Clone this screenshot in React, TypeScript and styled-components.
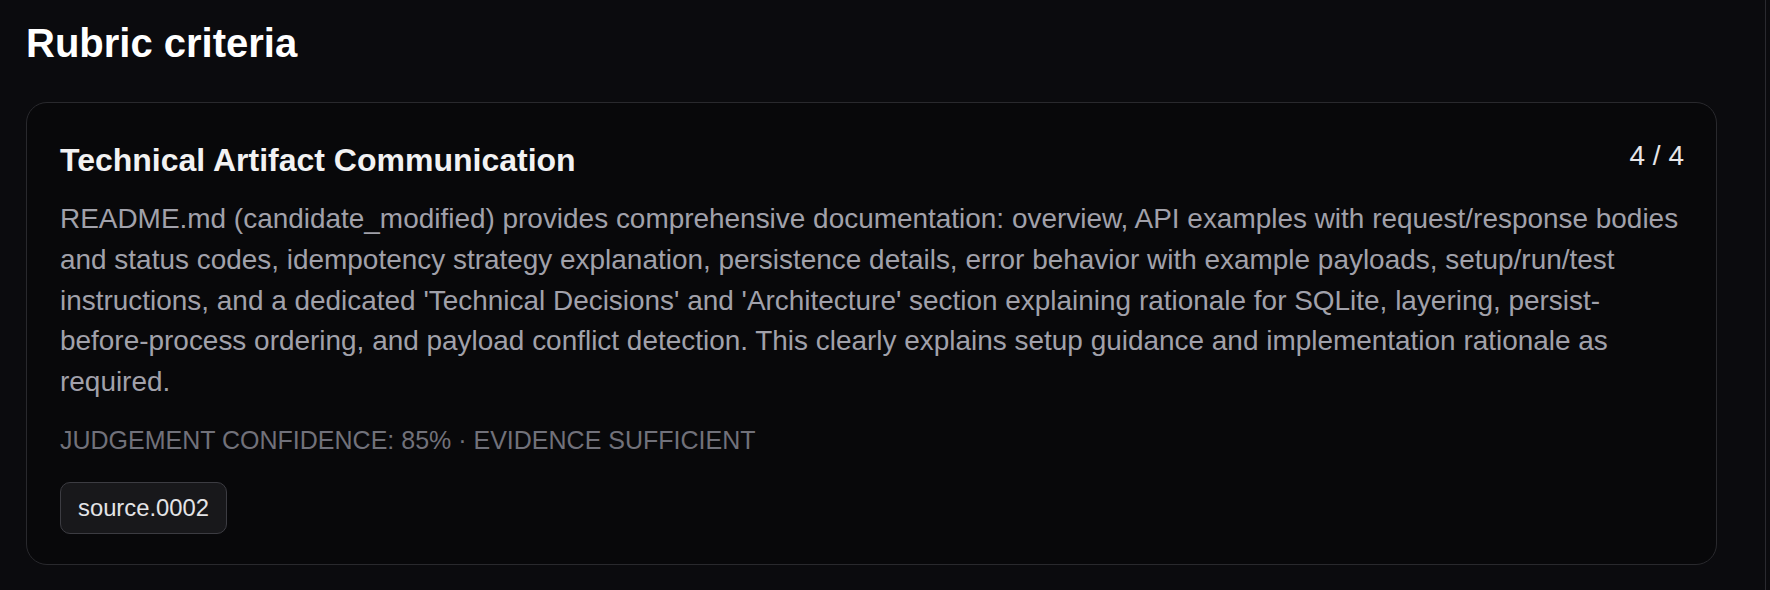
import React from "react";
import styled, { createGlobalStyle } from "styled-components";

const GlobalStyle = createGlobalStyle`
  html, body {
    margin: 0;
    padding: 0;
    background: #0b0b0e;
  }
  body {
    font-family: "Liberation Sans", Arial, Helvetica, sans-serif;
    -webkit-font-smoothing: antialiased;
  }
  * { box-sizing: border-box; }
`;

const Page = styled.main`
  width: 1766px;
  min-height: 590px;
  padding: 20px 48px 0 26px;
  border-right: 1px solid #2a2a2f;
  background: #0b0b0e;
`;

const Heading = styled.h2`
  margin: 0 0 36px;
  font-size: 40px;
  line-height: 46px;
  font-weight: 700;
  color: #ffffff;
`;

const Card = styled.section`
  border: 1px solid #29292d;
  border-radius: 21px;
  background: #08080a;
  padding: 33px 32px 30px 33px;
  display: flex;
  flex-direction: column;
`;

const CardHeader = styled.div`
  display: flex;
  align-items: flex-start;
  justify-content: space-between;
  gap: 24px;
`;

const CardTitle = styled.h3`
  margin: 0;
  padding-top: 5px;
  font-size: 32px;
  line-height: 39.4px;
  font-weight: 700;
  color: #f2f2f3;
`;

const Score = styled.span`
  font-size: 28px;
  line-height: 39.2px;
  color: #e6e6e8;
  white-space: nowrap;
`;

const Body = styled.p`
  margin: 19px 0 0;
  font-size: 27.95px;
  line-height: 40.6px;
  color: #a1a1aa;
`;

const Meta = styled.div`
  margin-top: 21px;
  font-size: 25px;
  line-height: 35.9px;
  color: #71717a;
  text-transform: uppercase;
`;

const Sources = styled.div`
  display: flex;
  flex-wrap: wrap;
  gap: 12px;
  margin-top: 23px;
`;

const Chip = styled.span`
  display: inline-block;
  padding: 8px 17px;
  font-size: 23.8px;
  line-height: 34px;
  color: #e4e4e7;
  background: #18181b;
  border: 1px solid #3c3c42;
  border-radius: 10px;
`;

const criterion = {
  title: "Technical Artifact Communication",
  score: "4 / 4",
  text:
    "README.md (candidate_modified) provides comprehensive documentation: overview, API examples with request/response bodies and status codes, idempotency strategy explanation, persistence details, error behavior with example payloads, setup/run/test instructions, and a dedicated 'Technical Decisions' and 'Architecture' section explaining rationale for SQLite, layering, persist-before-process ordering, and payload conflict detection. This clearly explains setup guidance and implementation rationale as required.",
  confidence: 85,
  evidence: "Evidence sufficient",
  sources: ["source.0002"],
};

export default function App() {
  return (
    <>
      <GlobalStyle />
      <Page>
        <Heading>Rubric criteria</Heading>
        <Card>
          <CardHeader>
            <CardTitle>{criterion.title}</CardTitle>
            <Score>{criterion.score}</Score>
          </CardHeader>
          <Body>{criterion.text}</Body>
          <Meta>
            Judgement confidence: {criterion.confidence}% · {criterion.evidence}
          </Meta>
          <Sources>
            {criterion.sources.map((s) => (
              <Chip key={s}>{s}</Chip>
            ))}
          </Sources>
        </Card>
      </Page>
    </>
  );
}
